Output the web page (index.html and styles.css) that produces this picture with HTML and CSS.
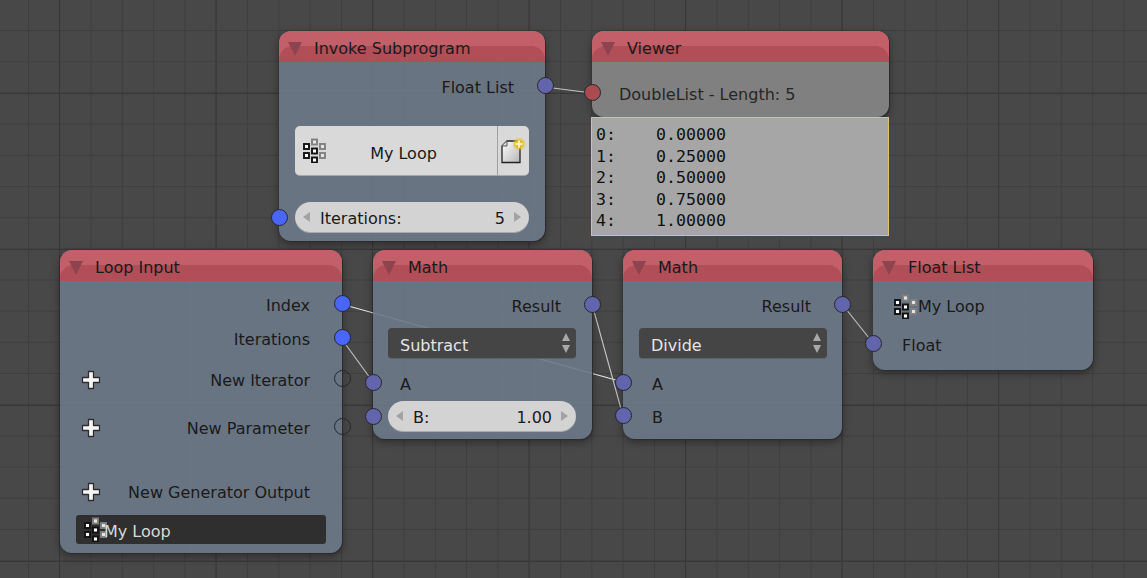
FILE: index.html
```html
<!DOCTYPE html>
<html lang="en">
<head>
    <meta charset="UTF-8">
    <title>Node Editor</title>
    <link rel="stylesheet" href="styles.css">
</head>
<body>
    <svg width="0" height="0" class="defs">
        <symbol id="icon-group" viewBox="0 0 24 25">
            <rect class="sq-on" x="2" y="6" width="5" height="5"/>
            <rect class="sq-on" x="2" y="15" width="5" height="5"/>
            <rect class="sq-off" x="10" y="1.5" width="5" height="5"/>
            <rect class="sq-on" x="10" y="10.5" width="5" height="5"/>
            <rect class="sq-on" x="10" y="19.5" width="5" height="5"/>
            <rect class="sq-off" x="18" y="6" width="5" height="5"/>
            <rect class="sq-off" x="18" y="15" width="5" height="5"/>
        </symbol>
        <symbol id="icon-plus" viewBox="0 0 20 20">
            <path d="M7.500 1.500h5v6h6v5h-6v6h-5v-6h-6v-5h6z" fill="#f6f6f6" stroke="#2e2e2e" stroke-width="1.300" stroke-linejoin="round"/>
        </symbol>
    </svg>

    <div class="editor">
        <svg class="links" width="1147" height="578">
            <path d="M545 87 L592 93"/>
            <path class="faint" d="M341 304 L623 382"/>
            <path d="M341 338 L373 382"/>
            <path d="M592 304 L623 416"/>
            <path d="M842 304 L873 343"/>
        </svg>

        <!-- Invoke Subprogram -->
        <div class="node node-invoke">
            <div class="node-header"><span class="arrow"></span><span class="title">Invoke Subprogram</span></div>
            <div class="row row-out row-first">Float List<span class="socket out list"></span></div>
            <div class="row row-pad row-field">
                <div class="id-field">
                    <svg class="icon-group"><use href="#icon-group"/></svg>
                    <span class="id-name">My Loop</span>
                    <span class="id-new">
                        <svg width="28" height="30" viewBox="0 0 28 30">
                            <defs>
                                <linearGradient id="paper" x1="0" y1="0" x2="1" y2="1">
                                    <stop offset="0" stop-color="#ffffff"/>
                                    <stop offset="1" stop-color="#b5b5b5"/>
                                </linearGradient>
                                <radialGradient id="glow">
                                    <stop offset="0.5" stop-color="#e8c01c"/>
                                    <stop offset="1" stop-color="#e8c01c" stop-opacity="0"/>
                                </radialGradient>
                            </defs>
                            <path d="M7 5h13v21.500H2V10z" fill="url(#paper)" stroke="#222" stroke-width="1.300"/>
                            <path d="M7 5v5H2" fill="#ddd" stroke="#555" stroke-width="1"/>
                            <circle cx="19" cy="8" r="7" fill="url(#glow)"/>
                            <path d="M19 4.500v7M15.500 8h7" stroke="#fff" stroke-width="1.600"/>
                        </svg>
                    </span>
                </div>
            </div>
            <div class="row row-pad row-iter">
                <span class="socket in value-in"></span>
                <div class="slider"><span class="tri-left"></span><span class="slider-label">Iterations:</span><span>5</span><span class="tri-right"></span></div>
            </div>
        </div>

        <!-- Viewer -->
        <div class="node node-viewer">
            <div class="node-header"><span class="arrow"></span><span class="title">Viewer</span></div>
            <div class="row row-in row-viewer"><span class="socket in debug"></span>DoubleList - Length: 5</div>
        </div>
        <pre class="viewer-output">0:    0.00000
1:    0.25000
2:    0.50000
3:    0.75000
4:    1.00000</pre>

        <!-- Loop Input -->
        <div class="node node-loop">
            <div class="node-header"><span class="arrow"></span><span class="title">Loop Input</span></div>
            <div class="row row-out loop-index">Index<span class="socket out value"></span></div>
            <div class="row row-out loop-iter">Iterations<span class="socket out value"></span></div>
            <div class="row row-out row-plus loop-new-iter"><svg class="icon-plus"><use href="#icon-plus"/></svg>New Iterator<span class="socket out empty"></span></div>
            <div class="row row-out row-plus loop-new-param"><svg class="icon-plus"><use href="#icon-plus"/></svg>New Parameter<span class="socket out empty"></span></div>
            <div class="row row-out row-plus loop-new-gen"><svg class="icon-plus"><use href="#icon-plus"/></svg>New Generator Output</div>
            <div class="row row-pad">
                <div class="text-field"><svg class="icon-group icon-dark"><use href="#icon-group"/></svg><span class="text-value">My Loop</span></div>
            </div>
        </div>

        <!-- Math, subtract -->
        <div class="node node-math1">
            <div class="node-header"><span class="arrow"></span><span class="title">Math</span></div>
            <div class="row row-out math-result">Result<span class="socket out list"></span></div>
            <div class="row row-pad">
                <div class="dropdown"><span class="dropdown-value">Subtract</span><span class="spin"><span class="spin-up"></span><span class="spin-down"></span></span></div>
            </div>
            <div class="row row-in math-a"><span class="socket in list"></span>A</div>
            <div class="row row-pad math-b">
                <span class="socket in list flat"></span>
                <div class="slider"><span class="tri-left"></span><span class="slider-label">B:</span><span>1.00</span><span class="tri-right"></span></div>
            </div>
        </div>

        <!-- Math, divide -->
        <div class="node node-math2">
            <div class="node-header"><span class="arrow"></span><span class="title">Math</span></div>
            <div class="row row-out math-result">Result<span class="socket out list"></span></div>
            <div class="row row-pad">
                <div class="dropdown"><span class="dropdown-value">Divide</span><span class="spin"><span class="spin-up"></span><span class="spin-down"></span></span></div>
            </div>
            <div class="row row-in math-a"><span class="socket in list"></span>A</div>
            <div class="row row-in math-b2"><span class="socket in list"></span>B</div>
        </div>

        <!-- Float List -->
        <div class="node node-float">
            <div class="node-header"><span class="arrow"></span><span class="title">Float List</span></div>
            <div class="row float-name"><svg class="icon-group"><use href="#icon-group"/></svg>My Loop</div>
            <div class="row row-in float-in"><span class="socket in list"></span>Float</div>
        </div>
    </div>
</body>
</html>
```

FILE: styles.css
```css
html, body {
    margin: 0;
    padding: 0;
    height: 100%;
    overflow: hidden;
}
.defs {
    position: absolute;
}
.sq-on {
    fill: #fff;
    stroke: #111;
    stroke-width: 1.9;
}
.sq-off {
    fill: #e4e4e4;
    stroke: #808080;
    stroke-width: 1.9;
}
.editor {
    position: relative;
    width: 1147px;
    height: 578px;
    overflow: hidden;
    font-family: "DejaVu Sans", sans-serif;
    font-size: 16px;
    color: #1a1a1a;
    background-color: #484848;
    background-image:
        linear-gradient(to right, #383838 1px, transparent 1px),
        linear-gradient(to bottom, #383838 1px, transparent 1px),
        linear-gradient(to right, #3f3f3f 1px, transparent 1px),
        linear-gradient(to bottom, #3f3f3f 1px, transparent 1px);
    background-size: 156.500px 156px, 156.500px 156px, 31.300px 31.200px, 31.300px 31.200px;
    background-position: 59px 0, 0 93px, 28px 0, 0 30px;
}
.links {
    position: absolute;
    left: 0;
    top: 0;
}
.links path {
    fill: none;
    stroke: #c4c4c4;
    stroke-width: 1.100;
}
.links .faint {
    stroke: #e4e4e4;
}

/* nodes */
.node {
    position: absolute;
    box-sizing: border-box;
    border-radius: 12px;
    background: rgba(109, 121, 138, 0.9);
    box-shadow: 1px 1px 0 #2c2c2c, 0 3px 9px rgba(0, 0, 0, 0.4);
}
.node-invoke { left: 279px; top: 31px; width: 266px; height: 210px; }
.node-viewer { left: 592px; top: 31px; width: 297px; height: 86px; background: rgba(130, 130, 130, 0.97); }
.node-loop { left: 60px; top: 250px; width: 282px; height: 303px; }
.node-math1 { left: 373px; top: 250px; width: 219px; height: 189px; }
.node-math2 { left: 623px; top: 250px; width: 219px; height: 189px; }
.node-float { left: 873px; top: 250px; width: 220px; height: 120px; }

.node-header {
    position: relative;
    display: flex;
    align-items: center;
    gap: 12px;
    height: 31px;
    padding-left: 9px;
    border-radius: 12px 12px 0 0;
    background: #c35f69;
    overflow: hidden;
}
.node-header::before {
    content: "";
    position: absolute;
    left: 0;
    right: 0;
    top: 15px;
    bottom: 0;
    border-radius: 14px 14px 0 0;
    background: #b14e58;
}
.arrow {
    position: relative;
    width: 0;
    height: 0;
    margin-top: 5px;
    border-left: 7.500px solid transparent;
    border-right: 7.500px solid transparent;
    border-top: 14px solid #8e444e;
}
.title {
    position: relative;
    margin-top: 4px;
}

.row {
    position: relative;
    display: flex;
    align-items: center;
    box-sizing: border-box;
}
.row-out {
    justify-content: flex-end;
    padding-right: 31px;
    height: 32px;
}
.node-loop .row-out { padding-right: 32px; }
.row-in {
    padding-left: 29px;
    height: 32px;
}
.row-pad {
    padding: 0 16px;
}
.node-math1 .row-in { padding-left: 27px; }
.node-math1 .row-pad { padding: 0 16px 0 15px; }
.node-math2 .row-pad { padding: 0 15px 0 16px; }
.row-first { height: 50px; }
.row-field { margin-top: 14px; }
.row-iter { margin-top: 26px; }
.row-viewer { margin-top: 16px; padding-left: 27px; color: #262626; }
.row-plus {
    justify-content: space-between;
    padding-left: 21px;
}
.loop-index { margin-top: 8px; }
.loop-iter { margin-top: 2px; }
.loop-new-iter { margin-top: 9px; }
.loop-new-param { margin-top: 16px; }
.loop-new-gen { margin-top: 32px; margin-bottom: 7px; }
.math-result { margin-top: 9px; margin-bottom: 6px; }
.math-a { margin-top: 9px; }
.math-b { margin-top: 1px; }
.math-b2 { margin-top: 1px; }
.float-name { height: 32px; margin-top: 9px; padding-left: 20px; gap: 1px; }
.float-in { margin-top: 7px; }

/* sockets */
.socket {
    position: absolute;
    box-sizing: border-box;
    width: 17px;
    height: 17px;
    top: calc(50% - 10.500px);
    border-radius: 50%;
    border: 1px solid #26262c;
}
.socket.in { left: -8.500px; }
.socket.out { right: -8.500px; }
.socket.list { background: #6264ac; }
.socket.value { background: #4a66fa; }
.socket.debug { background: #a84c50; }
.socket.empty { background: transparent; }
.socket.value-in { top: calc(50% - 9px); background: #4a66fa; }
.socket.flat { top: calc(50% - 9px); }

/* widgets */
.id-field {
    display: flex;
    align-items: center;
    width: 100%;
    height: 50px;
    box-sizing: border-box;
    padding-left: 7px;
    border-radius: 5px;
    background: #d9d9d9;
    border-bottom: 1px solid #a8a8a8;
}
.icon-group {
    width: 24px;
    height: 25px;
    flex: none;
}
.icon-plus {
    width: 20px;
    height: 20px;
}
.id-name {
    flex: 1;
    margin: 6px 16px 0 0;
    text-align: center;
}
.id-new {
    display: flex;
    align-items: center;
    justify-content: center;
    width: 32px;
    height: 100%;
    box-sizing: border-box;
    border-left: 1px solid #a0a0a0;
}
.slider {
    display: flex;
    align-items: center;
    width: 100%;
    height: 31px;
    box-sizing: border-box;
    padding: 3px 8px 0;
    border-radius: 16px;
    background: #d3d3d3;
    border-bottom: 1px solid #a9abae;
}
.slider-label {
    flex: 1;
    margin-left: 10px;
}
.tri-left, .tri-right {
    width: 0;
    height: 0;
    margin-top: -3px;
    border-top: 5.500px solid transparent;
    border-bottom: 5.500px solid transparent;
}
.tri-left { border-right: 7px solid #a2a2a2; }
.tri-right { border-left: 7px solid #a2a2a2; margin-left: 9px; }
.dropdown {
    display: flex;
    align-items: center;
    justify-content: space-between;
    width: 100%;
    height: 31px;
    box-sizing: border-box;
    padding: 0 0 0 12px;
    border-radius: 4px;
    background: #454545;
    border-bottom: 1px solid #5c6270;
    color: #e4e4e4;
}
.dropdown-value {
    margin-top: 4px;
}
.spin {
    display: flex;
    flex-direction: column;
    gap: 4px;
    margin-right: 6px;
}
.spin-up, .spin-down {
    width: 0;
    height: 0;
    border-left: 4.500px solid transparent;
    border-right: 4.500px solid transparent;
}
.spin-up { border-bottom: 8px solid #a8a8a8; }
.spin-down { border-top: 8px solid #a8a8a8; }
.text-field {
    display: flex;
    align-items: center;
    width: 100%;
    height: 29px;
    box-sizing: border-box;
    padding-left: 7px;
    border-radius: 3px;
    background: #2f2f2f;
    color: #d8d8d8;
}
.text-value {
    margin-top: 4px;
}
.icon-dark {
    margin-right: -3px;
}

/* viewer text */
.viewer-output {
    position: absolute;
    left: 591px;
    top: 117px;
    width: 298px;
    height: 119px;
    box-sizing: border-box;
    margin: 0;
    padding: 6px 0 0 4px;
    border: 1px solid #e0c070;
    background: rgba(168, 168, 168, 0.98);
    font-family: "DejaVu Sans Mono", monospace;
    font-size: 16.600px;
    line-height: 21.500px;
    color: #111;
}
```
